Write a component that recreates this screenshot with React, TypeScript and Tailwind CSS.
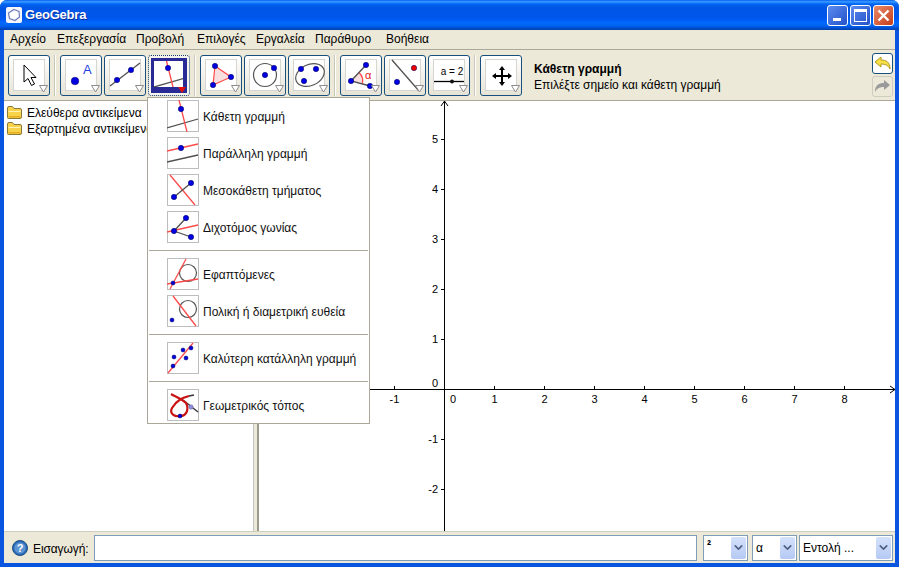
import type { ReactNode } from "react";
import { ChevronDown } from "lucide-react";

const font = "font-['Liberation_Sans',Arial,sans-serif]";

const menus = [
  { label: "Αρχείο", w: "w-[47px]" },
  { label: "Επεξεργασία", w: "w-[79px]" },
  { label: "Προβολή", w: "w-[61px]" },
  { label: "Επιλογές", w: "w-[59px]" },
  { label: "Εργαλεία", w: "w-[59px]" },
  { label: "Παράθυρο", w: "w-[71px]" },
  { label: "Βοήθεια", w: "w-[60px]" },
];

const Pt = ({ x, y, r = 2.7, c = "#0000e0" }: { x: number; y: number; r?: number; c?: string }) => (
  <circle cx={x} cy={y} r={r} fill={c} stroke="#00005a" strokeWidth="0.5" />
);
const Ln = ({ d, c = "#505050", w = 1.3 }: { d: string; c?: string; w?: number }) => (
  <path d={d} stroke={c} strokeWidth={w} fill="none" />
);
const RED = "#ff4a4a";

const icons: Record<string, ReactNode> = {
  arrow: <path d="M11 6V23L15 19.5L18.5 26.5L21.5 25L18 18.5H23Z" fill="#fff" stroke="#000" strokeWidth="1" />,
  point: (
    <>
      <Pt x={10} y={22} r={3.8} />
      <text x={18} y={15} fontSize="13" fill="#1c3fe0" fontFamily="Liberation Sans">A</text>
    </>
  ),
  line: (
    <>
      <Ln d="M1 27L31 4" />
      <Pt x={8} y={21} />
      <Pt x={22} y={11} />
    </>
  ),
  perp: (
    <>
      <Ln d="M0 28L31 19" />
      <Ln d="M12 0L20 32" c={RED} />
      <Pt x={14} y={9} />
    </>
  ),
  par: (
    <>
      <Ln d="M0 25L31 18" />
      <Ln d="M0 14L31 7" c={RED} />
      <Pt x={14} y={11} />
    </>
  ),
  mid: (
    <>
      <Ln d="M3 1L28 31" c={RED} />
      <Ln d="M7 23L24 9" />
      <Pt x={7} y={23} />
      <Pt x={24} y={9} />
    </>
  ),
  bis: (
    <>
      <Ln d="M0 21L31 14" c={RED} />
      <Ln d="M19 7L7 20L24 26" />
      <Pt x={7} y={20} />
      <Pt x={19} y={7} />
      <Pt x={24} y={26} />
    </>
  ),
  tan: (
    <>
      <circle cx={21} cy={15} r={8.5} fill="none" stroke="#555" strokeWidth="1.2" />
      <Ln d="M3 31L19 1" c={RED} />
      <Ln d="M0 26L31 21" c={RED} />
      <Pt x={6} y={25} r={2} />
    </>
  ),
  polar: (
    <>
      <circle cx={21} cy={14} r={8.5} fill="none" stroke="#555" strokeWidth="1.2" />
      <Ln d="M6 1L29 31" c={RED} />
      <Pt x={5} y={25} r={2} />
    </>
  ),
  fit: (
    <>
      <Ln d="M1 31L26 1" c={RED} />
      <Pt x={7} y={15} r={2} />
      <Pt x={16} y={8} r={2} />
      <Pt x={24} y={6} r={2} />
      <Pt x={19} y={16} r={2} />
      <Pt x={6} y={24} r={2} />
    </>
  ),
  locus: (
    <>
      <Ln d="M16 11L31 23" c="#333" />
      <Ln d="M22 7L27 6" c="#333" />
      <Ln d="M22 7C15 9 10 11 5 19C2 25 8 28 13 27C20 27 22 20 19 14C15 10 9 8 4 5" c="#c81414" w={2.2} />
      <circle cx={24} cy={18} r={2.2} fill="#8f8fe0" stroke="#5c5c90" strokeWidth="0.5" />
      <Pt x={13} y={27} r={2} />
    </>
  ),
  poly: (
    <>
      <path d="M10 7L26 18L8 26Z" fill="#f8e0e0" stroke={RED} strokeWidth="1.2" />
      <Pt x={10} y={7} />
      <Pt x={26} y={18} />
      <Pt x={8} y={26} />
    </>
  ),
  circle: (
    <>
      <circle cx={16} cy={16} r={11.5} fill="none" stroke="#555" strokeWidth="1.2" />
      <Pt x={16} y={16} />
      <Pt x={25} y={9} />
    </>
  ),
  conic: (
    <>
      <ellipse cx={17} cy={16} rx={15} ry={10.5} fill="none" stroke="#555" strokeWidth="1.2" transform="rotate(-25 17 16)" />
      <Pt x={8} y={10} />
      <Pt x={23} y={10} />
      <Pt x={11} y={22} />
    </>
  ),
  angle: (
    <>
      <path d="M6 22L14 13.5A12 12 0 0 1 17.5 24.5Z" fill="#f8e0e0" />
      <Ln d="M14 13.5A12 12 0 0 1 17.5 24.5" c={RED} />
      <Ln d="M21 6L6 22L25 27" />
      <Pt x={21} y={6} />
      <Pt x={6} y={22} />
      <Pt x={25} y={27} />
      <text x={20} y={20} fontSize="11" fill="#e02020" fontFamily="Liberation Sans">α</text>
    </>
  ),
  linept: (
    <>
      <Ln d="M3 1L30 32" />
      <Pt x={25} y={9} c="#f00000" />
      <Pt x={8} y={23} />
    </>
  ),
  slider: (
    <>
      <text x={19} y={16} textAnchor="middle" fontSize="10" fill="#000" fontFamily="Liberation Sans">a = 2</text>
      <Ln d="M1 22.5H31" c="#000" />
      <circle cx={19} cy={22.5} r={2} fill="#111" />
    </>
  ),
  move: (
    <path
      d="M17 7L20 11H18V16H23V14L27 17L23 20V18H18V23H20L17 27L14 23H16V18H11V20L7 17L11 14V16H16V11H14Z"
      fill="#000"
    />
  ),
};

const Icon = ({ name }: { name: string }) => (
  <svg width="32" height="32" viewBox="0 0 32 32" className="block">
    {icons[name]}
  </svg>
);

function ToolButton({ name, active }: { name: string; active?: boolean }) {
  if (active) {
    return (
      <div className="relative h-[41px] w-[42px] rounded-[3px] border border-dotted border-[#16386b] bg-[#f4f3ec] p-[2px]">
        <div className="h-[35px] w-[36px] overflow-hidden border-b-[6px] border-l-[3px] border-r-[4px] border-t-[3px] border-[#2a2a96] bg-white">
          <div className="-mt-[2px]">
            <Icon name={name} />
          </div>
        </div>
        <div className="absolute bottom-[2px] right-[3px] h-0 w-0 border-x-[4px] border-t-[6px] border-x-transparent border-t-[#e01010]" />
      </div>
    );
  }
  return (
    <div className="relative h-[41px] w-[42px] rounded-[3px] border border-[#17507f] bg-gradient-to-b from-white to-[#e6e3d6] pl-[4px] pt-[3px]">
      <div className="h-[32px] w-[32px] border border-[#d6d5cf] bg-white">
        <div className="-m-px">
          <Icon name={name} />
        </div>
      </div>
      <svg width="9" height="8" viewBox="0 0 9 8" className="absolute bottom-[2px] right-[1px]">
        <path d="M0.5 0.5H8.5L4.5 7Z" fill="#fff" stroke="#8c8c8c" />
      </svg>
    </div>
  );
}

const Sep = () => <div className="mx-[4px] h-[41px] w-px border-l border-r border-l-[#c9c6b8] border-r-white" />;

function Tile({ name }: { name: string }) {
  return (
    <div className="h-[32px] w-[32px] border border-[#bdbdbd] bg-white">
      <div className="-m-px">
        <Icon name={name} />
      </div>
    </div>
  );
}

function PopItem({ icon, label, mt }: { icon: string; label: string; mt?: string }) {
  return (
    <div className={`flex h-[32px] items-center gap-[4px] pl-[19px] ${mt ?? ""}`}>
      <Tile name={icon} />
      <span className="pt-[2px] text-[12px] text-[#111]">{label}</span>
    </div>
  );
}

const PopSep = () => <div className="mx-px mt-[7px] h-px bg-[#aca899]" />;

function Folder() {
  return (
    <svg width="15" height="13" viewBox="0 0 15 13" className="block shrink-0">
      <path d="M0.5 3V11.5Q0.5 12.5 1.5 12.5H13Q14.5 12.5 14.5 11V4Q14.5 2.5 13 2.5H7L5.5 0.5H2Q0.5 0.5 0.5 2Z" fill="#f7d24a" stroke="#8a7a3a" />
      <path d="M1.5 5H13.5V6H1.5Z" fill="#fff3b0" />
      <path d="M1.5 10H13.5V11.5H1.5Z" fill="#e6ad1e" />
    </svg>
  );
}

function Combo({ w, label, cls }: { w: string; label: string; cls?: string }) {
  return (
    <div className={`flex h-[26px] items-center justify-between border border-[#7f9db9] bg-white pl-[3px] pr-px ${w}`}>
      <span className={cls ?? "text-[12px] text-black"}>{label}</span>
      <div className="flex h-[22px] w-[15px] items-center justify-center rounded-[2px] bg-gradient-to-b from-[#d4e1fb] to-[#b5c9f3]">
        <ChevronDown size={13} strokeWidth={3} className="text-[#4d6185]" />
      </div>
    </div>
  );
}

function Graph() {
  const xs = [-1, 1, 2, 3, 4, 5, 6, 7, 8];
  const ys = [5, 4, 3, 2, 1, -1, -2];
  const ox = 185;
  const oy = 288;
  return (
    <svg width="636" height="430" className="block" fontFamily="Liberation Sans" fontSize="11" fill="#000">
      <path d={`M${ox + 0.5} 0V430M0 ${oy + 0.5}H636`} stroke="#000" />
      <path d={`M${ox - 3} 5L${ox + 0.5} 0L${ox + 4} 5M631 ${oy - 3}L636 ${oy + 0.5}L631 ${oy + 4}`} stroke="#000" fill="none" />
      {xs.map((n) => (
        <g key={n}>
          <path d={`M${ox + n * 50 + 0.5} ${oy - 3}v3`} stroke="#000" />
          <text x={ox + n * 50 + 0.5} y={oy + 14} textAnchor="middle">{n}</text>
        </g>
      ))}
      {ys.map((n) => (
        <g key={n}>
          <path d={`M${ox - 3} ${oy - n * 50 + 0.5}h3`} stroke="#000" />
          <text x={ox - 6} y={oy - n * 50 + 4} textAnchor="end">{n}</text>
        </g>
      ))}
      <text x={ox - 6} y={oy - 2} textAnchor="end">0</text>
      <text x={ox + 9} y={oy + 14} textAnchor="middle">0</text>
    </svg>
  );
}

export default function App() {
  return (
    <div className={`relative flex h-[567px] w-[899px] flex-col overflow-hidden rounded-t-[7px] bg-[#0a55e0] ${font}`}>
      {/* TITLE BAR */}
      <div className="flex h-[30px] shrink-0 items-center justify-between bg-[linear-gradient(180deg,#0058ee_0%,#3593ff_4%,#288eff_8%,#0a6cf8_12%,#0262ee_16%,#0057e5_24%,#0055eb_56%,#005bf5_66%,#026afe_76%,#0062ef_86%,#0052d6_92%,#0040ab_100%)] pl-[6px] pr-[5px]">
        <div className="flex items-center gap-[3px]">
          <svg width="16" height="16" viewBox="0 0 16 16" className="block">
            <rect width="16" height="16" rx="2" fill="#f4f6fb" />
            <path d="M8 2.5L13 4.5L13.5 10L9 13.5L3.5 11.5L2.5 6Z" fill="#fff" stroke="#6d7bb8" strokeWidth="1.2" />
          </svg>
          <span className="text-[13px] font-bold tracking-[-0.2px] text-white [text-shadow:1px_1px_0_#0a2f9c]">GeoGebra</span>
        </div>
        <div className="flex gap-[2px]">
          <div className="flex h-[21px] w-[21px] items-end rounded-[3px] border border-white bg-gradient-to-br from-[#5d8cf0] to-[#2450c8] pb-[4px] pl-[5px]">
            <div className="h-[3px] w-[8px] bg-white" />
          </div>
          <div className="flex h-[21px] w-[21px] items-center justify-center rounded-[3px] border border-white bg-gradient-to-br from-[#5d8cf0] to-[#2450c8]">
            <div className="h-[13px] w-[13px] border border-t-[3px] border-white" />
          </div>
          <div className="flex h-[21px] w-[21px] items-center justify-center rounded-[3px] border border-white bg-gradient-to-br from-[#e98a6a] to-[#c63a12]">
            <svg width="13" height="13" viewBox="0 0 13 13" className="block">
              <path d="M1.5 1.5L11.5 11.5M11.5 1.5L1.5 11.5" stroke="#fff" strokeWidth="2.4" />
            </svg>
          </div>
        </div>
      </div>

      <div className="mx-[4px] mb-[4px] flex min-h-0 flex-1 flex-col bg-[#ece9d8]">
        {/* MENU */}
        <div className="flex h-[19px] shrink-0 items-center pb-[2px] pl-[6px] text-[12px] text-black">
          {menus.map((m) => (
            <span key={m.label} className={`whitespace-nowrap ${m.w}`}>
              {m.label}
            </span>
          ))}
        </div>

        {/* TOOLBAR */}
        <div className="flex h-[52px] shrink-0 items-center border-y border-[#aca899] pl-[4px] pr-[2px]">
          <ToolButton name="arrow" />
          <Sep />
          <div className="flex gap-[2px]">
            <ToolButton name="point" />
            <ToolButton name="line" />
            <ToolButton name="perp" active />
          </div>
          <Sep />
          <div className="flex gap-[2px]">
            <ToolButton name="poly" />
            <ToolButton name="circle" />
            <ToolButton name="conic" />
          </div>
          <Sep />
          <div className="flex gap-[2px]">
            <ToolButton name="angle" />
            <ToolButton name="linept" />
            <ToolButton name="slider" />
          </div>
          <Sep />
          <ToolButton name="move" />
          <div className="ml-[12px] flex-1 pt-[4px] text-[12px] leading-[16px] text-black">
            <div className="font-bold">Κάθετη γραμμή</div>
            <div>Επιλέξτε σημείο και κάθετη γραμμή</div>
          </div>
          <div className="flex flex-col gap-[2px]">
            <div className="flex h-[21px] w-[21px] items-center justify-center rounded-[3px] border border-[#17507f] bg-white">
              <svg width="17" height="15" viewBox="0 0 17 15" className="block">
                <path d="M1 6L7 1V4C12 4 16 6 16 13C14 9 11 8 7 8V11Z" fill="#f6e04a" stroke="#b59a1c" />
              </svg>
            </div>
            <div className="flex h-[21px] w-[21px] items-center justify-center rounded-[3px] border border-[#cfccc0] bg-[#ece9d8]">
              <svg width="17" height="15" viewBox="0 0 17 15" className="block">
                <path d="M16 6L10 1V4C5 4 1 6 1 13C3 9 6 8 10 8V11Z" fill="#9a9a9a" />
              </svg>
            </div>
          </div>
        </div>

        {/* MAIN */}
        <div className="flex min-h-0 flex-1 bg-white">
          <div className="w-[249px] shrink-0 space-y-[3px] overflow-hidden pl-[3px] pt-[5px] text-[12px] text-black">
            <div className="flex h-[13px] items-center gap-[5px] whitespace-nowrap">
              <Folder />
              <span>Ελεύθερα αντικείμενα</span>
            </div>
            <div className="flex h-[13px] items-center gap-[5px] whitespace-nowrap">
              <Folder />
              <span>Εξαρτημένα αντικείμενα</span>
            </div>
          </div>
          <div className="w-[6px] shrink-0 border-l border-r-2 border-l-[#c4c4c4] border-r-[#9c9a8c] bg-[#ece9d8]" />
          <div className="min-w-0 flex-1">
            <Graph />
          </div>
        </div>

        {/* INPUT BAR */}
        <div className="flex h-[32px] shrink-0 items-center border-t border-[#cfccc0] pl-[8px] pr-[2px]">
          <svg width="16" height="16" viewBox="0 0 16 16" className="block shrink-0">
            <circle cx="8" cy="8" r="7.5" fill="#2e6db5" stroke="#1c4a86" />
            <circle cx="8" cy="8" r="5.6" fill="#5c93d3" />
            <text x="8" y="12" textAnchor="middle" fontSize="11" fontWeight="bold" fill="#fff" fontFamily="Liberation Sans">?</text>
          </svg>
          <span className="ml-[5px] w-[56px] shrink-0 whitespace-nowrap pt-[2px] text-[12px] tracking-[-0.1px] text-black">Εισαγωγή:</span>
          <div className="ml-[5px] h-[26px] w-[603px] shrink-0 border border-[#7f9db9] bg-white" />
          <div className="ml-[6px]">
            <Combo w="w-[45px]" label="²" cls="text-[12px] font-bold leading-[12px] text-black -mt-[6px]" />
          </div>
          <div className="ml-[4px]">
            <Combo w="w-[45px]" label="α" />
          </div>
          <div className="ml-[2px]">
            <Combo w="w-[94px]" label="Εντολή ..." />
          </div>
        </div>
      </div>

      {/* TOOL POPUP */}
      <div className="absolute left-[147px] top-[97px] w-[223px] border border-[#aca899] bg-white pt-[2px]">
        <PopItem icon="perp" label="Κάθετη γραμμή" />
        <PopItem icon="par" label="Παράλληλη γραμμή" mt="mt-[5px]" />
        <PopItem icon="mid" label="Μεσοκάθετη τμήματος" mt="mt-[5px]" />
        <PopItem icon="bis" label="Διχοτόμος γωνίας" mt="mt-[5px]" />
        <PopSep />
        <PopItem icon="tan" label="Εφαπτόμενες" mt="mt-[7px]" />
        <PopItem icon="polar" label="Πολική ή διαμετρική ευθεία" mt="mt-[5px]" />
        <PopSep />
        <PopItem icon="fit" label="Καλύτερη κατάλληλη γραμμή" mt="mt-[7px]" />
        <PopSep />
        <PopItem icon="locus" label="Γεωμετρικός τόπος" mt="mt-[7px]" />
        <div className="h-[2px]" />
      </div>
    </div>
  );
}
